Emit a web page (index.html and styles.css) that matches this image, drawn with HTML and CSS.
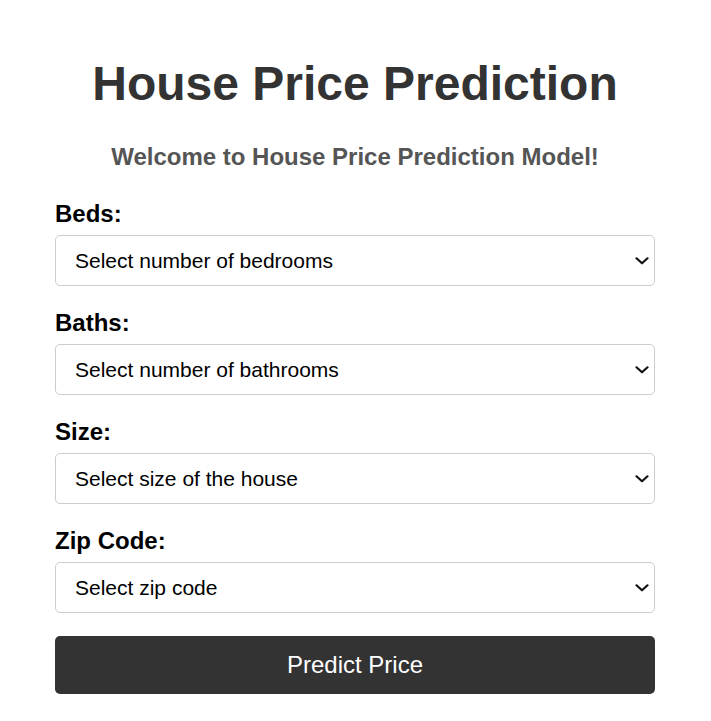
FILE: index.html
```html
<!DOCTYPE html>
<html lang="en">
<head>
<meta charset="utf-8">
<title>House Price Prediction</title>
<link rel="stylesheet" href="styles.css">
</head>
<body>
<div class="container">
  <h1 class="title">House Price Prediction</h1>
  <h2 class="subtitle">Welcome to House Price Prediction Model!</h2>
  <form class="form">
    <div class="field">
      <label class="label" for="beds">Beds:</label>
      <div class="select-wrap">
        <select class="select" id="beds">
          <option>Select number of bedrooms</option>
        </select>
        <svg class="chevron" width="14" height="8" viewBox="0 0 14 8" aria-hidden="true"><polyline points="1.5,1.3 7,6.3 12.5,1.3" fill="none" stroke="#111" stroke-width="2.2" stroke-linecap="round" stroke-linejoin="round"/></svg>
      </div>
    </div>
    <div class="field">
      <label class="label" for="baths">Baths:</label>
      <div class="select-wrap">
        <select class="select" id="baths">
          <option>Select number of bathrooms</option>
        </select>
        <svg class="chevron" width="14" height="8" viewBox="0 0 14 8" aria-hidden="true"><polyline points="1.5,1.3 7,6.3 12.5,1.3" fill="none" stroke="#111" stroke-width="2.2" stroke-linecap="round" stroke-linejoin="round"/></svg>
      </div>
    </div>
    <div class="field">
      <label class="label" for="size">Size:</label>
      <div class="select-wrap">
        <select class="select" id="size">
          <option>Select size of the house</option>
        </select>
        <svg class="chevron" width="14" height="8" viewBox="0 0 14 8" aria-hidden="true"><polyline points="1.5,1.3 7,6.3 12.5,1.3" fill="none" stroke="#111" stroke-width="2.2" stroke-linecap="round" stroke-linejoin="round"/></svg>
      </div>
    </div>
    <div class="field">
      <label class="label" for="zip">Zip Code:</label>
      <div class="select-wrap">
        <select class="select" id="zip">
          <option>Select zip code</option>
        </select>
        <svg class="chevron" width="14" height="8" viewBox="0 0 14 8" aria-hidden="true"><polyline points="1.5,1.3 7,6.3 12.5,1.3" fill="none" stroke="#111" stroke-width="2.2" stroke-linecap="round" stroke-linejoin="round"/></svg>
      </div>
    </div>
    <button type="button" class="button">Predict Price</button>
  </form>
</div>
</body>
</html>
```
FILE: styles.css
```css
html, body {
  margin: 0;
  padding: 0;
  background: #ffffff;
}
body {
  font-family: "Liberation Sans", Arial, sans-serif;
  color: #000;
  padding-right: 1px;
}
.container {
  max-width: 600px;
  margin: 0 auto;
  padding-top: 24px;
}
.title {
  font-size: 48px;
  font-weight: bold;
  color: #333333;
  text-align: center;
  margin: 32px 0 32px;
}
.subtitle {
  font-size: 24px;
  font-weight: bold;
  color: #555555;
  text-align: center;
  margin: 0 0 29px;
}
.form {
  display: flex;
  flex-direction: column;
}
.field {
  display: flex;
  flex-direction: column;
  margin-bottom: 23px;
}
.label {
  font-size: 24px;
  line-height: 27px;
  font-weight: bold;
  margin-bottom: 8px;
}
.select-wrap {
  position: relative;
}
.select {
  display: block;
  width: 100%;
  height: 51px;
  padding: 0 30px 0 19px;
  font-family: "Liberation Sans", Arial, sans-serif;
  font-size: 21px;
  color: #000;
  background: #fff;
  border: 1px solid #cccccc;
  border-radius: 5px;
  box-sizing: border-box;
  appearance: none;
  -webkit-appearance: none;
}
.chevron {
  position: absolute;
  right: 6px;
  top: 50%;
  margin-top: -4px;
  pointer-events: none;
}
.button {
  width: 100%;
  padding: 15px;
  font-family: "Liberation Sans", Arial, sans-serif;
  font-size: 24px;
  color: #fff;
  background: #333333;
  border: none;
  border-radius: 5px;
}
```
